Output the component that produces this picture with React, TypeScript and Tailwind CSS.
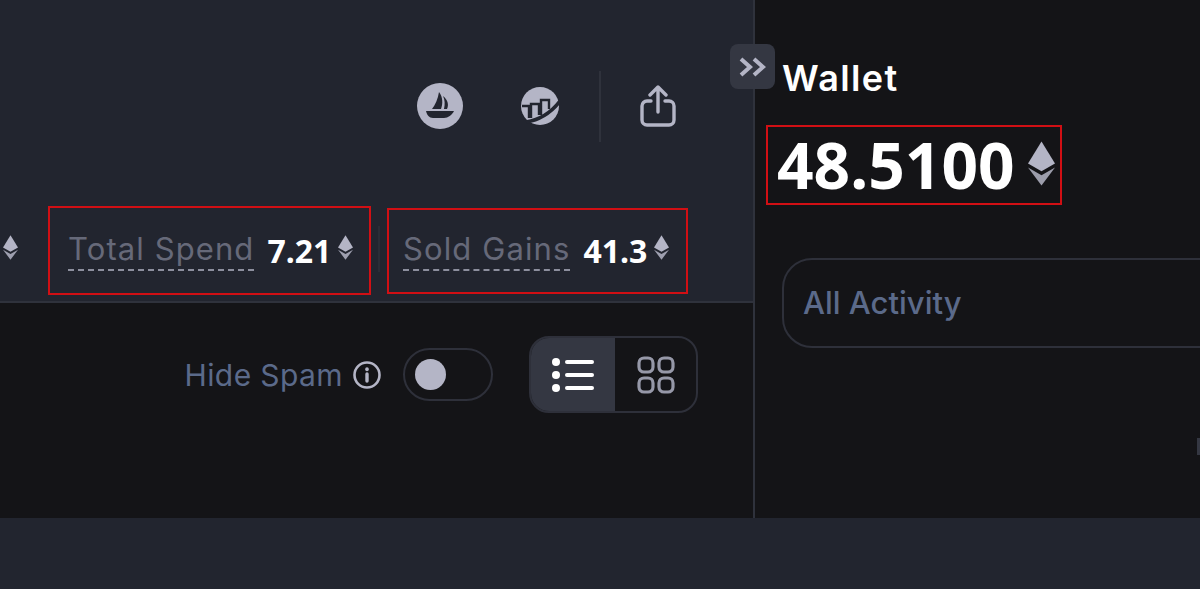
const EthIcon = ({ className }: { className: string }) => (
  <svg viewBox="0 0 16 26" className={className} fill="#b4b5c6">
    <path d="M8 0 L16 13 L8 17.6 L0 13 Z" />
    <path d="M0 15.4 L8 20 L16 15.4 L8 26 Z" opacity="0.85" />
  </svg>
);

const Stat = ({ label, value, className }: { label: string; value: string; className: string }) => (
  <div className={`flex items-start border-2 border-[#d10f14] ${className}`}>
    <span className="h-[39px] border-b-2 border-dashed border-[#8d8f9e] text-[31px] leading-[34px] tracking-[1.1px] text-[#666979] font-['Inter',sans-serif] font-normal whitespace-nowrap">
      {label}
    </span>
    <span className="ml-[13px] text-[32px] leading-[38px] font-bold text-white font-['Noto_Sans',sans-serif]">{value}</span>
    <EthIcon className="ml-[7px] mt-[3px] w-[15px] h-[25px]" />
  </div>
);

export default function App() {
  return (
    <div className="w-[1200px] h-[589px] overflow-hidden bg-[#22252f] flex flex-col relative">
      <div className="flex h-[518px]">
        {/* Left column */}
        <div className="w-[755px] shrink-0 border-r-2 border-[#2f323c] bg-[#141417] flex flex-col">
          <div className="h-[303px] bg-[#22252f] border-b-2 border-[#2f323c] flex flex-col">
            <div className="flex items-center justify-end h-[206px] pt-[6px] pr-[77px]">
              <div className="flex items-center">
                {/* OpenSea */}
                <svg viewBox="0 0 46 46" className="w-[46px] h-[46px]">
                  <circle cx="23" cy="23" r="23" fill="#b4b5c6" />
                  <path d="M22 9 C26 14 26 21 24 26 H15 C18 22 21 16 22 9 Z M26 13 C31 17 32 22 30 26 H27 C28 21 28 17 26 13 Z" fill="#22252f" />
                  <path d="M9 28 H37 C35 32 31 35 27 35 H16 C12 35 10 32 9 28 Z" fill="#22252f" />
                </svg>
                {/* Dune style chart */}
                <svg viewBox="0 0 40 40" className="w-[40px] h-[40px] ml-[57px]">
                  <circle cx="20" cy="20" r="19" fill="#b4b5c6" />
                  <path d="M2 20 H9 V32 M9 20 H10 M11 32 V18 H19 V29 M21 29 V14 H29 V23" fill="none" stroke="#22252f" strokeWidth="2.4" />
                  <path d="M6 36 C18 34 30 28 40 15" fill="none" stroke="#22252f" strokeWidth="3.6" />
                </svg>
                <div className="w-[2px] h-[71px] bg-[#2f323c] ml-[39px] mr-[39px]" />
                <svg viewBox="0 0 36 42" className="w-[36px] h-[42px]" fill="none" stroke="#b4b5c6" strokeWidth="3.4" strokeLinecap="round" strokeLinejoin="round">
                  <path d="M18 27 V3 M10 10 L18 2 L26 10" />
                  <path d="M11 16 H7 A5 5 0 0 0 2 21 V35 A5 5 0 0 0 7 40 H29 A5 5 0 0 0 34 35 V21 A5 5 0 0 0 29 16 H25" />
                </svg>
              </div>
            </div>
            <div className="flex justify-end items-start pr-[65px]">
              <EthIcon className="mt-[29px] mr-[30px] w-[15px] h-[25px]" />
              <Stat label="Total Spend" value="7.21" className="w-[323px] h-[89px] pl-[18px] pt-[24px]" />
              <div className="w-[2px] h-[46px] mt-[20px] mx-[7px] bg-[#2a2d37]" />
              <Stat label="Sold Gains" value="41.3" className="w-[301px] h-[86px] mt-[2px] pl-[14px] pt-[22px]" />
            </div>
          </div>
          <div className="flex items-center justify-end pr-[55px] pt-[33px]">
            <span className="text-[30px] leading-[34px] tracking-[0.4px] text-[#5b6a8a] font-['Inter',sans-serif] font-normal">Hide Spam</span>
            <svg viewBox="0 0 30 30" className="w-[30px] h-[30px] ml-[9px]" fill="none" stroke="#b4b5c6" strokeWidth="2.6" strokeLinecap="round">
              <circle cx="15" cy="15" r="12.5" />
              <path d="M15 14 V21" strokeWidth="3.4" />
              <path d="M15 9 V9.4" strokeWidth="3.6" />
            </svg>
            <div className="ml-[21px] w-[90px] h-[53px] rounded-full border-2 border-[#2e303a] flex items-center pl-[10px]">
              <div className="w-[31px] h-[31px] rounded-full bg-[#b4b5c6]" />
            </div>
            <div className="ml-[36px] w-[169px] h-[77px] rounded-[20px] border-2 border-[#2e303a] flex overflow-hidden">
              <div className="w-[84px] bg-[#343742] flex items-center justify-center">
                <svg viewBox="0 0 42 36" className="w-[42px] h-[36px]" fill="#ffffff">
                  <circle cx="4" cy="5" r="4" />
                  <circle cx="4" cy="18" r="4" />
                  <circle cx="4" cy="31" r="4" />
                  <rect x="13" y="3" width="29" height="4" rx="2" />
                  <rect x="13" y="16" width="29" height="4" rx="2" />
                  <rect x="13" y="29" width="29" height="4" rx="2" />
                </svg>
              </div>
              <div className="flex-1 flex items-center justify-center">
                <svg viewBox="0 0 38 38" className="w-[38px] h-[38px]" fill="none" stroke="#9698a8" strokeWidth="3.2">
                  <rect x="2" y="2" width="14" height="14" rx="5" />
                  <rect x="22" y="2" width="14" height="14" rx="5" />
                  <rect x="2" y="22" width="14" height="14" rx="5" />
                  <rect x="22" y="22" width="14" height="14" rx="5" />
                </svg>
              </div>
            </div>
          </div>
        </div>
        {/* Right column */}
        <div className="flex-1 bg-[#141417] pl-[27px] pt-[56px] overflow-hidden">
          <h2 className="text-[36px] leading-[44px] tracking-[1.4px] font-semibold text-white font-['Inter',sans-serif]">Wallet</h2>
          <div className="mt-[25px] -ml-[16px] w-[296px] h-[80px] border-2 border-[#d10f14] flex items-center pl-[9px]">
            <span className="text-[64px] leading-[76px] font-bold text-white font-['Noto_Sans',sans-serif]">48.5100</span>
            <EthIcon className="ml-[13px] w-[27px] h-[45px] -mt-[3px]" />
          </div>
          <div className="mt-[53px] w-[500px] h-[90px] rounded-[30px] border-2 border-[#2e303a] flex items-center pl-[19px]">
            <span className="text-[31px] font-medium text-[#5b6a8a] font-['Inter',sans-serif]">All Activity</span>
          </div>
        </div>
      </div>
      {/* Collapse handle */}
      <div className="absolute left-[730px] top-[44px] w-[45px] h-[45px] rounded-[8px] bg-[#343742] flex items-center justify-center">
        <svg viewBox="0 0 28 20" className="w-[28px] h-[20px]" fill="none" stroke="#b4b5c6" strokeWidth="4">
          <path d="M2 2 L11 10 L2 18 M15 2 L24 10 L15 18" />
        </svg>
      </div>
      {/* Clipped glyph at the right edge */}
      <div className="absolute left-[1197px] top-[438px] w-[3px] h-[17px] bg-[#343742]" />
    </div>
  );
}
